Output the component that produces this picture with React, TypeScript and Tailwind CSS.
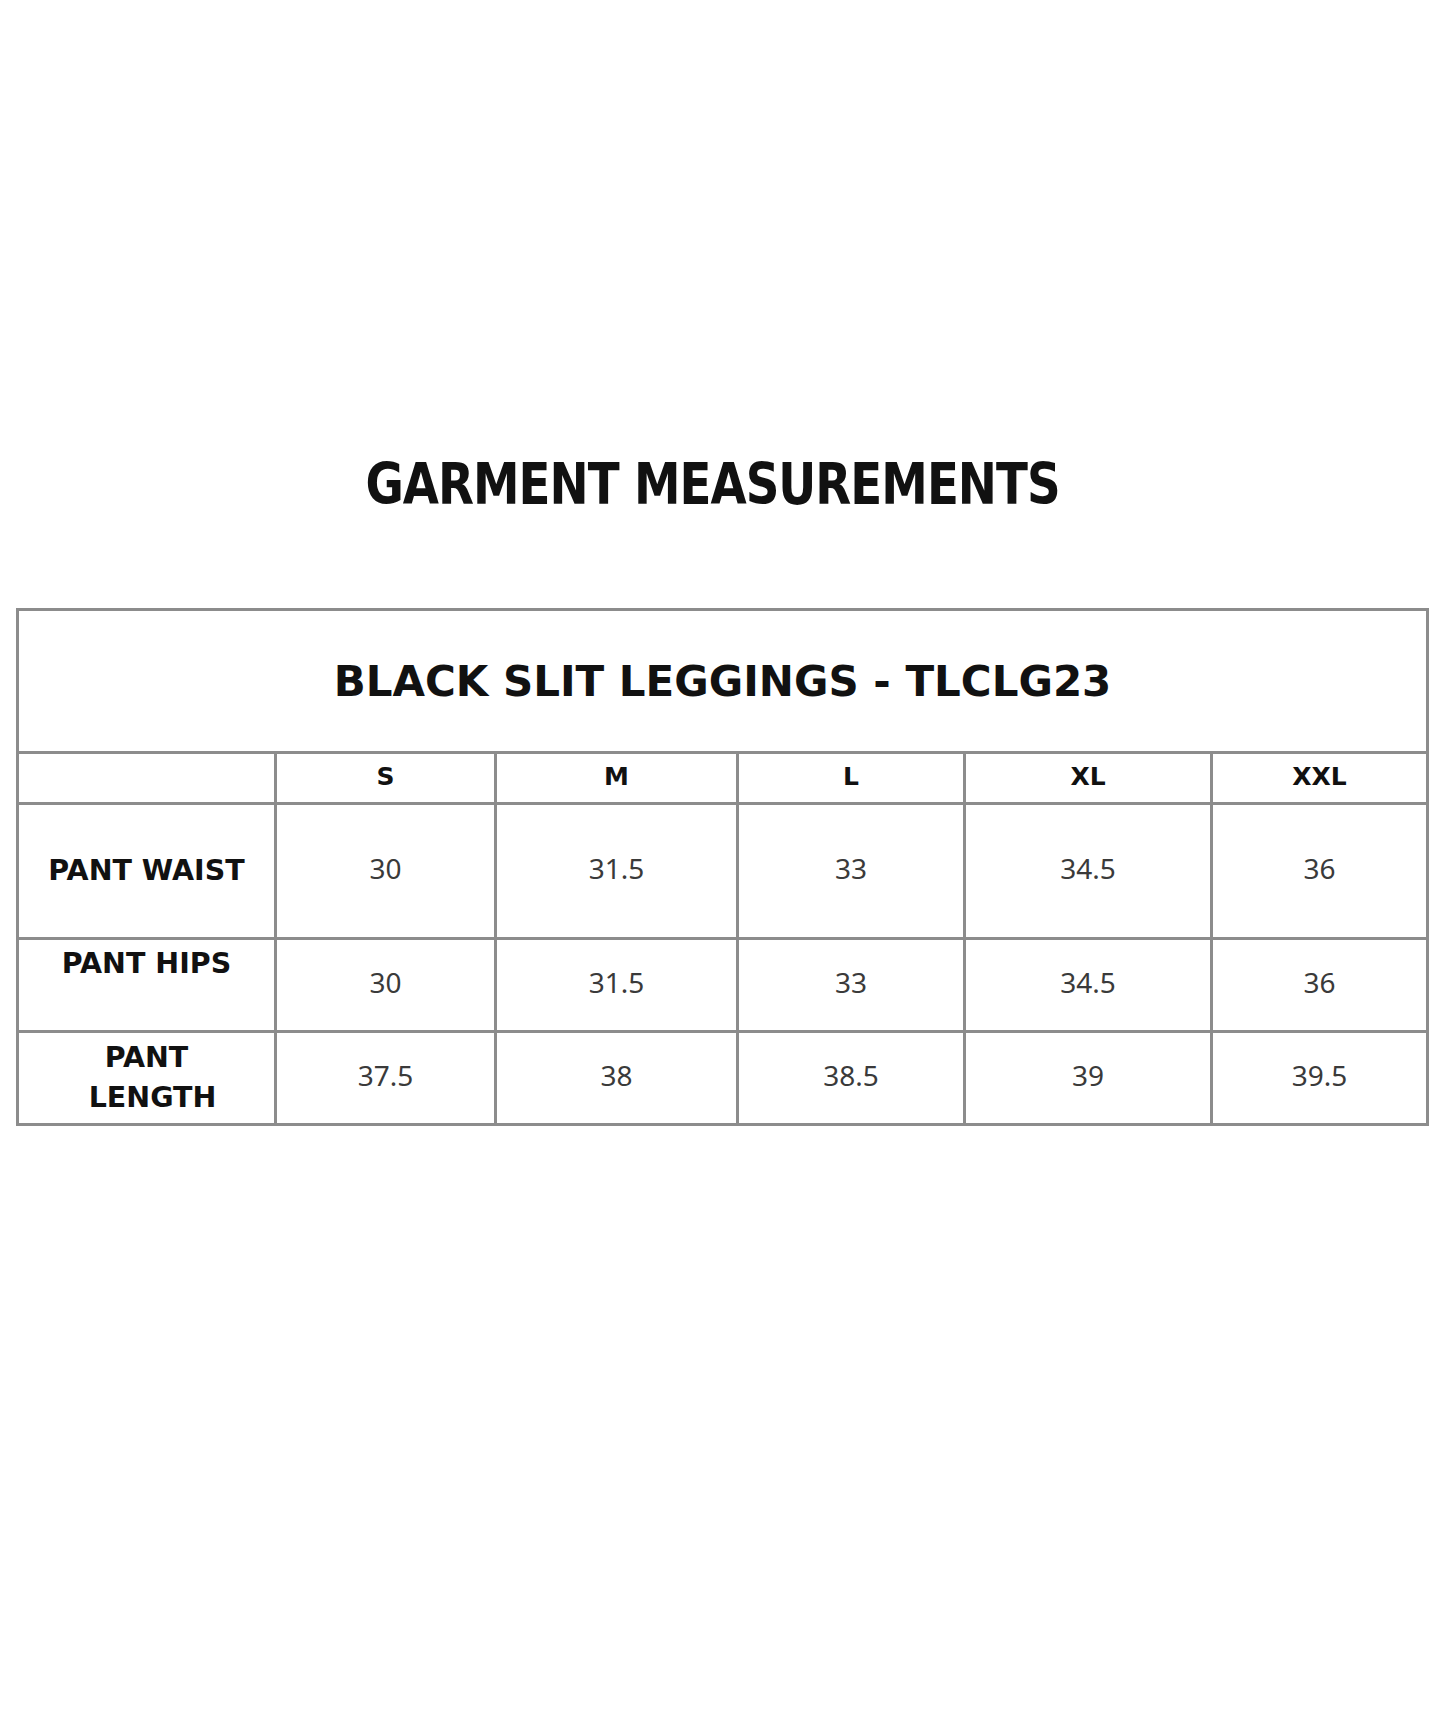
import React from "react";

const sizes = ["S", "M", "L", "XL", "XXL"];

const rows = [
  { label: ["PANT WAIST"], values: ["30", "31.5", "33", "34.5", "36"], align: "center" },
  { label: ["PANT HIPS"], values: ["30", "31.5", "33", "34.5", "36"], align: "top" },
  { label: ["PANT", "LENGTH"], values: ["37.5", "38", "38.5", "39", "39.5"], align: "center" },
];

const rowHeights = ["h-[132px]", "h-[90px]", "h-[90px]"];

export default function App() {
  return (
    <div className="min-h-[1734px] w-full bg-white">
      <div className="pt-[444px] flex flex-col">
        {/* heading - sits a little left of centre in the original */}
        <div className="h-[80px] flex items-center justify-center pr-[20px]">
          <h1 className="font-['DejaVu_Sans_Condensed','DejaVu_Sans',sans-serif] font-bold text-[52px] leading-none text-[#111] tracking-[-1px] scale-y-110">
            GARMENT MEASUREMENTS
          </h1>
        </div>

        {/* measurement table */}
        <div className="mt-[84px] ml-4 w-[1413px] bg-[#8c8c8c] p-[3px] grid grid-cols-[255px_217px_239px_224px_244px_213px] gap-[3px]">
          <div className="col-span-6 h-[140px] bg-white flex items-center justify-center pt-[1px]">
            <span className="font-['DejaVu_Sans',sans-serif] font-bold text-[42px] leading-none text-[#111]">
              BLACK SLIT LEGGINGS - TLCLG23
            </span>
          </div>

          <div className="h-[48px] bg-white" />
          {sizes.map((s) => (
            <div key={s} className="h-[48px] bg-white flex items-center justify-center pb-[4px]">
              <span className="font-['DejaVu_Sans',sans-serif] font-bold text-[25px] leading-none text-[#111]">{s}</span>
            </div>
          ))}

          {rows.map((row, i) => (
            <React.Fragment key={row.label.join(" ")}>
              <div
                className={`${rowHeights[i]} bg-white flex flex-col items-center ${
                  row.align === "top" ? "justify-start pt-[4px]" : "justify-center"
                }`}
              >
                {row.label.map((l) => (
                  <span
                    key={l}
                    className={`font-['DejaVu_Sans',sans-serif] font-bold text-[28.5px] leading-[40px] text-[#111] ${
                      l === "LENGTH" ? "ml-[12px]" : ""
                    }`}
                  >
                    {l}
                  </span>
                ))}
              </div>
              {row.values.map((v, j) => (
                <div key={j} className={`${rowHeights[i]} bg-white flex items-center justify-center pb-[6px]`}>
                  <span className="font-['Noto_Sans',sans-serif] text-[28px] leading-none text-[#3a3a3a]">{v}</span>
                </div>
              ))}
            </React.Fragment>
          ))}
        </div>
      </div>
    </div>
  );
}
